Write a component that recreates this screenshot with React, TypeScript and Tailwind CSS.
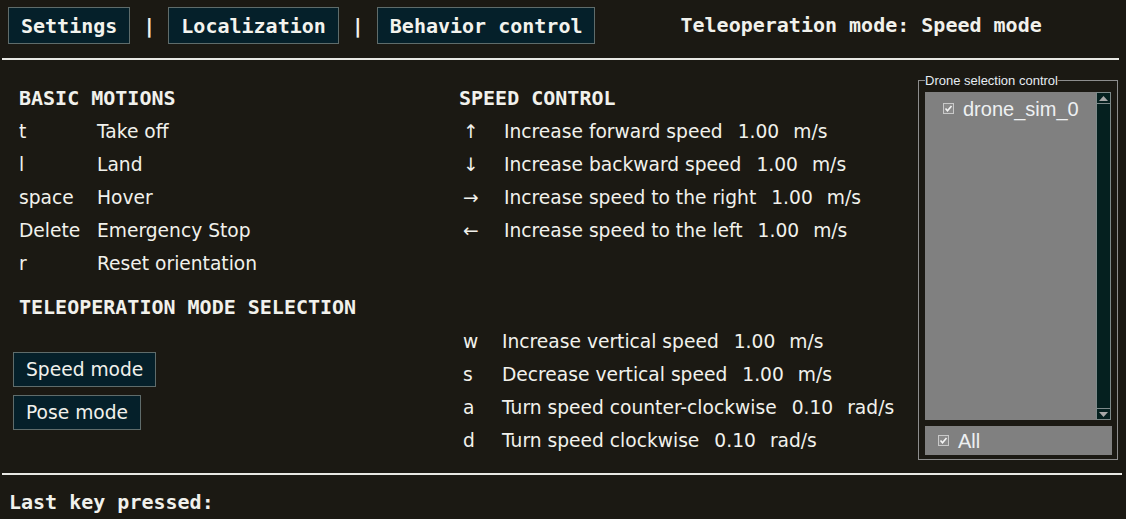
import React from "react";

const mono = { fontFamily: '"DejaVu Sans Mono", monospace' };
const sans = { fontFamily: '"DejaVu Sans", sans-serif' };
const arial = { fontFamily: '"Liberation Sans", Arial, sans-serif' };

function TopButton({ label }: { label: string }) {
  return (
    <div className="h-[37px] px-[12px] flex items-center border border-[#5f6c6b] bg-[#05202a] text-[20px] font-bold text-[#f3f3ee] leading-none">
      {label}
    </div>
  );
}

function Sep() {
  return <div className="mx-[13px] w-[12px] text-[20px] font-bold text-[#f3f3ee] leading-none">|</div>;
}

function Check() {
  return (
    <svg width="11" height="11" viewBox="0 0 11 11" className="shrink-0">
      <rect x="0.5" y="0.5" width="10" height="10" fill="#8a8a8a" stroke="#c9c9c9" />
      <polyline points="2.5,5.5 4.5,7.8 8.5,3" fill="none" stroke="#f4f4f4" strokeWidth="1.6" />
    </svg>
  );
}

const basic = [
  ["t", "Take off"],
  ["l", "Land"],
  ["space", "Hover"],
  ["Delete", "Emergency Stop"],
  ["r", "Reset orientation"],
];

const speed1 = [
  ["↑", "Increase forward speed", "1.00", "m/s"],
  ["↓", "Increase backward speed", "1.00", "m/s"],
  ["→", "Increase speed to the right", "1.00", "m/s"],
  ["←", "Increase speed to the left", "1.00", "m/s"],
];

const speed2 = [
  ["w", "Increase vertical speed", "1.00", "m/s"],
  ["s", "Decrease vertical speed", "1.00", "m/s"],
  ["a", "Turn speed counter-clockwise", "0.10", "rad/s"],
  ["d", "Turn speed clockwise", "0.10", "rad/s"],
];

export default function App() {
  return (
    <div className="w-[1126px] h-[519px] bg-[#1b1913] text-[#f1f1ec] overflow-hidden" style={mono}>
      {/* top bar */}
      <div className="h-[58px] pl-[8px] pt-[7px] flex items-start">
        <div className="flex items-center h-[37px]">
          <TopButton label="Settings" />
          <Sep />
          <TopButton label="Localization" />
          <Sep />
          <TopButton label="Behavior control" />
          <div className="ml-[85px] mt-[-1px] text-[20px] font-bold leading-none">Teleoperation mode: Speed mode</div>
        </div>
      </div>
      <div className="h-[2px] w-[1117px] ml-[2px] bg-[#e8e8e4]" />

      {/* main */}
      <div className="h-[413px] flex items-start">
        {/* left column */}
        <div className="w-[459px] pl-[13px] pt-[21px] flex flex-col">
          <div className="h-[33px] pl-[6px] flex items-center text-[20px] font-bold">BASIC MOTIONS</div>
          {basic.map(([k, d]) => (
            <div key={k} className="h-[33px] pl-[6px] pt-[2px] flex items-center text-[18.67px]" style={sans}>
              <span className="w-[78px]">{k}</span>
              <span>{d}</span>
            </div>
          ))}
          <div className="h-[33px] mt-[11px] pl-[6px] flex items-center text-[20px] font-bold">
            TELEOPERATION MODE SELECTION
          </div>
          <div className="mt-[29px] flex flex-col items-start gap-[8px] text-[18.67px]" style={sans}>
            <div className="h-[35px] px-[12px] flex items-center border border-[#5f6c6b] bg-[#05202a]">Speed mode</div>
            <div className="h-[35px] px-[12px] flex items-center border border-[#5f6c6b] bg-[#05202a]">Pose mode</div>
          </div>
        </div>

        {/* middle column */}
        <div className="w-[459px] pt-[21px] flex flex-col">
          <div className="h-[33px] flex items-center text-[20px] font-bold">SPEED CONTROL</div>
          {speed1.map(([k, d, v, u]) => (
            <div key={d} className="h-[33px] pl-[4px] pt-[2px] flex items-center text-[18.67px] whitespace-nowrap" style={sans}>
              <span className="w-[41px]">{k}</span>
              <span>{d}</span>
              <span className="ml-[15px]">{v}</span>
              <span className="ml-[14px]">{u}</span>
            </div>
          ))}
          <div className="mt-[78px]" />
          {speed2.map(([k, d, v, u]) => (
            <div key={d} className="h-[33px] pl-[4px] pt-[2px] flex items-center text-[18.67px] whitespace-nowrap" style={sans}>
              <span className="w-[39px]">{k}</span>
              <span>{d}</span>
              <span className="ml-[15px]">{v}</span>
              <span className="ml-[14px]">{u}</span>
            </div>
          ))}
        </div>

        {/* right panel */}
        <fieldset className="mt-[13px] w-[200px] border border-[#8d8d8d] pl-[6px] pr-[5px] pt-[4px] pb-[4px]" style={arial}>
          <legend className="text-[13px] leading-[15px] text-[#e6ecf2]">Drone selection control</legend>
          <div className="flex h-[328px]">
            <div className="w-[171px] bg-[#808080] pt-[8px] pl-[18px]">
              <div className="flex items-center h-[17px] gap-[9px]">
                <Check />
                <span className="text-[20px] leading-none text-[#eef0f2]">drone_sim_0</span>
              </div>
            </div>
            <div className="w-[15px] bg-[#05201f] border border-[#7e8a8a] flex flex-col justify-between">
              <div className="h-[11px] border-b border-[#7e8a8a] flex items-center justify-center">
                <svg width="9" height="5" viewBox="0 0 9 5"><polygon points="0,5 9,5 4.5,0" fill="#a8a8a8" /></svg>
              </div>
              <div className="h-[11px] border-t border-[#7e8a8a] flex items-center justify-center">
                <svg width="9" height="5" viewBox="0 0 9 5"><polygon points="0,0 9,0 4.5,5" fill="#a8a8a8" /></svg>
              </div>
            </div>
          </div>
          <div className="mt-[6px] h-[29px] bg-[#808080] flex items-center pl-[13px] gap-[9px]">
            <Check />
            <span className="text-[20px] leading-none text-[#eef0f2]">All</span>
          </div>
        </fieldset>
      </div>

      <div className="h-[2px] w-[1120px] ml-[2px] bg-[#e8e8e4]" />
      <div className="h-[56px] pl-[9px] flex items-center text-[20px] font-bold pb-[2px]">Last key pressed:</div>
    </div>
  );
}
